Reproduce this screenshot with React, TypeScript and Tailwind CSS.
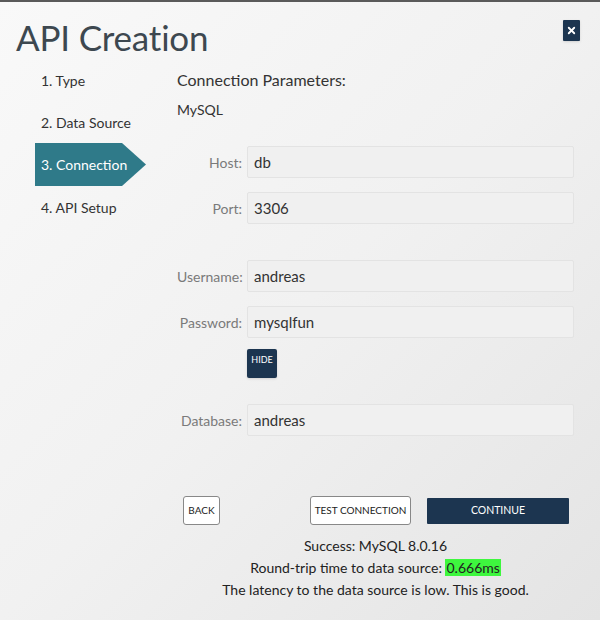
import { X } from "lucide-react";

const steps = ["1. Type", "2. Data Source", "3. Connection", "4. API Setup"];

function Field({ label, value }: { label: string; value: string }) {
  return (
    <div className="flex items-center">
      <label className="w-[70px] shrink-0 text-right pr-[5px] text-[14px] text-[#7a7a7a] whitespace-nowrap">{label}</label>
      <div className="w-[327px] h-[32px] bg-[#f0f0f0] border border-[#e3e3e3] rounded-[2px] flex items-center px-[6px] text-[15px] text-[#333]">
        {value}
      </div>
    </div>
  );
}

export default function App() {
  return (
    <div className="w-[600px] h-[620px] border-t-2 border-[#5a5a5a] bg-gradient-to-br from-[#f9f9f9] via-[#f1f1f1] to-[#e4e4e4] font-['Lato',sans-serif] text-[#333] overflow-hidden">
      {/* header */}
      <div className="flex justify-between items-start pl-[16px] pr-[20px] pt-[13px]">
        <h1 className="text-[35px] leading-[44px] text-[#3d4850] tracking-[-0.2px]">API Creation</h1>
        <button className="mt-[5px] w-[17px] h-[21px] bg-[#1c3550] rounded-[1px] flex items-center justify-center shadow-sm">
          <X className="w-[11px] h-[11px] text-white" strokeWidth={4} />
        </button>
      </div>

      <div className="flex">
        {/* steps */}
        <div className="w-[177px] shrink-0 pl-[35px]">
          {steps.map((s, i) =>
            i === 2 ? (
              <div
                key={s}
                className="h-[43px] w-[111px] bg-[#2f7a89] text-white text-[14px] flex items-center pl-[6px] [clip-path:polygon(0_0,87px_0,100%_50%,87px_100%,0_100%)]"
              >
                {s}
              </div>
            ) : (
              <div key={s} className="h-[42px] flex items-center pl-[6px] text-[14px] text-[#333]">
                {s}
              </div>
            )
          )}
        </div>

        {/* form */}
        <div className="w-[397px] flex flex-col">
          <div className="h-[42px] flex items-center text-[16px] text-[#333]">Connection Parameters:</div>
          <div className="text-[14px] leading-[18px] text-[#333]">MySQL</div>

          <div className="mt-[27px] flex flex-col gap-[14px]">
            <Field label="Host:" value="db" />
            <Field label="Port:" value="3306" />
          </div>

          <div className="mt-[36px] flex flex-col gap-[14px]">
            <Field label="Username:" value="andreas" />
            <Field label="Password:" value="mysqlfun" />
          </div>
          <div className="pl-[70px] mt-[11px]">
            <button className="w-[30px] h-[29px] bg-[#1c3550] text-white text-[9px] leading-none rounded-[2px] flex items-start justify-center pt-[6px] shadow-sm">
              HIDE
            </button>
          </div>

          <div className="mt-[26px]">
            <Field label="Database:" value="andreas" />
          </div>

          <div className="mt-[60px] flex items-center pl-[6px]">
            <button className="h-[29px] w-[37px] bg-white border border-[#888] rounded-[3px] text-[10px] text-[#222]">BACK</button>
            <button className="ml-[90px] h-[29px] w-[101px] bg-white border border-[#888] rounded-[3px] text-[10px] text-[#222] whitespace-nowrap">
              TEST CONNECTION
            </button>
            <button className="ml-[16px] h-[26px] w-[142px] bg-[#1c3550] text-white text-[10.5px] rounded-[1px]">CONTINUE</button>
          </div>

          <div className="mt-[10px] flex flex-col items-center text-[14px] leading-[22px] text-[#222]">
            <p>Success: MySQL 8.0.16</p>
            <p>
              Round-trip time to data source: <span className="bg-[#3ef73e] px-[1px]">0.666ms</span>
            </p>
            <p>The latency to the data source is low. This is good.</p>
          </div>
        </div>
      </div>
    </div>
  );
}
